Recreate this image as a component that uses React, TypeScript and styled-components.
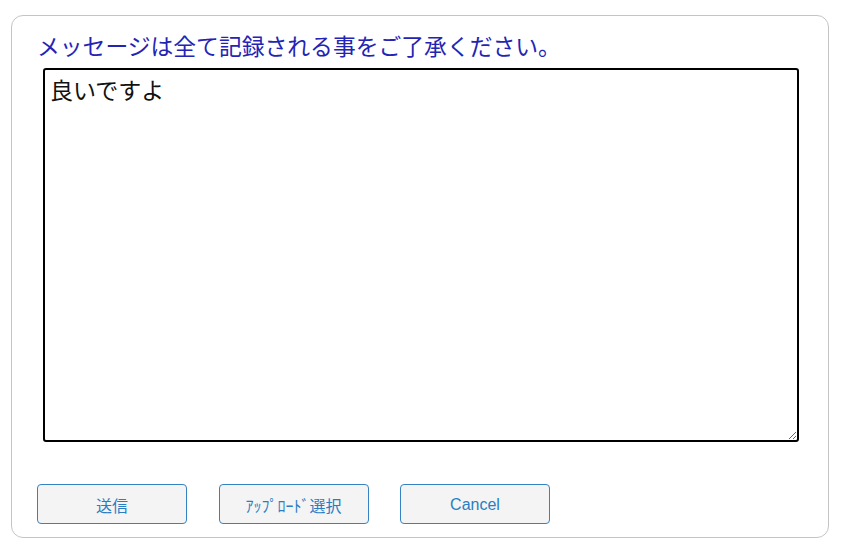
import React from "react";
import styled, { createGlobalStyle } from "styled-components";

const Global = createGlobalStyle`
  html, body { margin: 0; padding: 0; background: #ffffff; }
  body { font-family: "Noto Sans CJK JP", "Noto Sans", sans-serif; }
  * { box-sizing: border-box; }
`;

const Page = styled.div`
  padding: 15px 15px 0 11px;
`;

const Card = styled.div`
  width: 818px;
  height: 523px;
  border: 1px solid #c4c4c4;
  border-radius: 12px;
  display: flex;
  flex-direction: column;
  padding: 14px 29px 0 25px;
`;

const Title = styled.div`
  font-family: "Noto Sans CJK JP", sans-serif;
  font-size: 22.8px;
  line-height: 32px;
  color: #2424b4;
  white-space: nowrap;
`;

const Message = styled.textarea`
  margin: 6px 0 0 6px;
  width: 756px;
  height: 374px;
  border: 2px solid #000000;
  border-radius: 3px;
  padding: 4px 5px;
  font-family: "Noto Sans CJK JP", sans-serif;
  font-size: 23px;
  line-height: 30px;
  color: #111111;
  resize: both;
  outline: none;
`;

const Buttons = styled.div`
  display: flex;
  gap: 31.5px;
  margin-top: 42px;
`;

const Button = styled.button`
  width: 150px;
  height: 40px;
  border: 1px solid #3583c2;
  border-radius: 4px;
  background: #f4f4f4;
  color: #2a7dc2;
  font-family: "Liberation Sans", "Noto Sans CJK JP", sans-serif;
  font-size: 16px;
  padding: 1px 0 0;
  cursor: pointer;
`;

export default function App() {
  return (
    <>
      <Global />
      <Page>
        <Card>
          <Title>メッセージは全て記録される事をご了承ください。</Title>
          <Message defaultValue="良いですよ" />
          <Buttons>
            <Button>送信</Button>
            <Button>ｱｯﾌﾟﾛｰﾄﾞ選択</Button>
            <Button>Cancel</Button>
          </Buttons>
        </Card>
      </Page>
    </>
  );
}
